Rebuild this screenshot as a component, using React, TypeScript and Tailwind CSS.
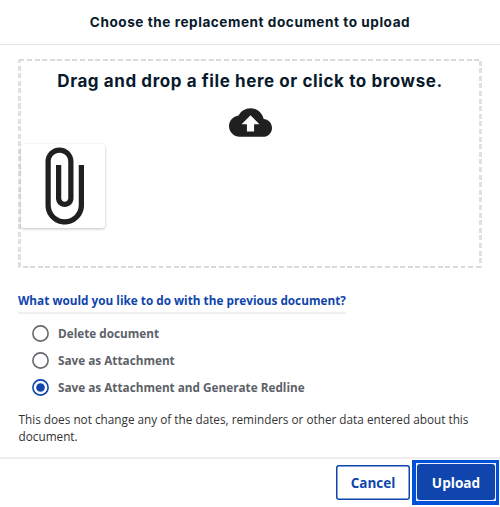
import React, { useState } from 'react'

const options = ['Delete document', 'Save as Attachment', 'Save as Attachment and Generate Redline']

const DropZone = () => {
  return (
    // dashed edges are gradients in the order top, bottom, left, right
    <div className="ml-[18px] mt-[14px] h-[209px] w-[464px] rounded-[2px] border-x-3 border-y-2 border-transparent [background-image:repeating-linear-gradient(90deg,transparent_0_1.4px,#dadada_1.4px_6.4px,transparent_6.4px_7.58px),repeating-linear-gradient(90deg,#dadada_0_2px,transparent_2px_4.6px,#dadada_4.6px_7.55px),repeating-linear-gradient(180deg,#e0e0e0_0_4.2px,transparent_4.2px_6.7px,#e0e0e0_6.7px_7.55px),repeating-linear-gradient(180deg,transparent_0_1.7px,#e0e0e0_1.7px_6.7px,transparent_6.7px_7.6px)] [background-origin:border-box] [background-position:top,bottom,left,right] [background-repeat:no-repeat] [background-size:100%_2px,100%_2px,3px_100%,3px_100%]">
      <h2 className="mt-[9px] whitespace-nowrap text-center font-['Inter',sans-serif] text-[17px] font-bold leading-[22px] tracking-[0.59px] text-[#081a2b]">
        Drag and drop a file here or click to browse.
      </h2>
      <svg viewBox="0 0 24 24" className="mx-auto mt-[9px] size-[43px] fill-[#202020]">
        <path d="M19.35 10.04C18.67 6.59 15.64 4 12 4 9.11 4 6.6 5.64 5.35 8.04 2.34 8.36 0 10.91 0 14c0 3.31 2.69 6 6 6h13c2.76 0 5-2.24 5-5 0-2.64-2.05-4.78-4.65-4.96zM14 13v4h-4v-4H7l5-5 5 5h-3z" />
      </svg>
      <div className="size-[84px] rounded-[3px] bg-white shadow-[0_1px_3px_rgba(0,0,0,0.25)]">
        <svg viewBox="0 0 24 24" className="size-[84px] fill-[#202020]">
          <path d="M16.5 6v11.5c0 2.21-1.79 4-4 4s-4-1.79-4-4V5c0-1.38 1.12-2.5 2.5-2.5s2.5 1.12 2.5 2.5v10.5c0 .55-.45 1-1 1s-1-.45-1-1V6H10v9.5c0 1.38 1.12 2.5 2.5 2.5s2.5-1.12 2.5-2.5V5c0-2.21-1.79-4-4-4S7 2.79 7 5v12.5c0 3.04 2.46 5.5 5.5 5.5s5.5-2.46 5.5-5.5V6h-1.5z" />
        </svg>
      </div>
    </div>
  )
}

const App = () => {
  const [selected, setSelected] = useState(2)

  return (
    <div className="flex h-[507px] w-[500px] flex-col overflow-hidden bg-white font-['Open_Sans',sans-serif]">
      <header className="flex h-[45px] shrink-0 items-center justify-center border-b border-[#e4e4e4]">
        <h1 className="whitespace-nowrap font-['Inter',sans-serif] text-[13.6px] font-bold tracking-[0.54px] text-[#081a2b]">
          Choose the replacement document to upload
        </h1>
      </header>

      <main className="h-[412px] shrink-0">
        <DropZone />
        <div className="ml-[18px] mt-[22px] h-[24px] w-[328px] whitespace-nowrap border-b-2 border-[#efefef] text-[11.78px] font-bold leading-[20px] text-[#0f45ad]">
          What would you like to do with the previous document?
        </div>
        <div className="ml-[32px] mt-[6.5px] flex flex-col">
          {options.map((label, i) => (
            <button
              key={label}
              onClick={() => setSelected(i)}
              className="flex h-[26.8px] items-center gap-[9px] text-[11.75px] font-bold text-[#5d6168]"
            >
              <svg viewBox="0 0 17 17" className={selected === i ? 'size-[17px] text-[#0f45ad]' : 'size-[17px] text-[#66696d]'}>
                <circle cx="8.5" cy="8.5" r="7.6" fill="none" stroke="currentColor" strokeWidth="1.6" />
                {selected === i && <circle cx="8.5" cy="8.5" r="4.3" fill="currentColor" />}
              </svg>
              <span className="whitespace-nowrap">{label}</span>
            </button>
          ))}
        </div>
        <p className="ml-[18.5px] mt-[10.5px] w-[462px] text-[11.77px] leading-[16.8px] text-[#333]">
          This does not change any of the dates, reminders or other data entered about this document.
        </p>
      </main>

      <footer className="flex h-[50px] shrink-0 items-start justify-end gap-[2px] border-t-2 border-[#efefef] pr-px pt-px">
        <button className="mt-[5px] h-[35px] w-[74px] rounded-[3px] pt-px text-[13.5px] font-bold text-[#0f45ad] shadow-[inset_0_0_0_1.5px_#0f45ad]">
          Cancel
        </button>
        {/* focus ring around the primary action */}
        <div className="h-[45px] w-[87px] bg-[#0050d8] pb-1 pl-1 pr-[3px] pt-[3px]">
          <div className="h-[38px] w-[80px] bg-[#e8effc] p-px">
            <button className="size-full rounded-[3px] bg-[#0f45ad] pt-0.5 text-[13.6px] font-bold text-white">Upload</button>
          </div>
        </div>
      </footer>
    </div>
  )
}

export default App
